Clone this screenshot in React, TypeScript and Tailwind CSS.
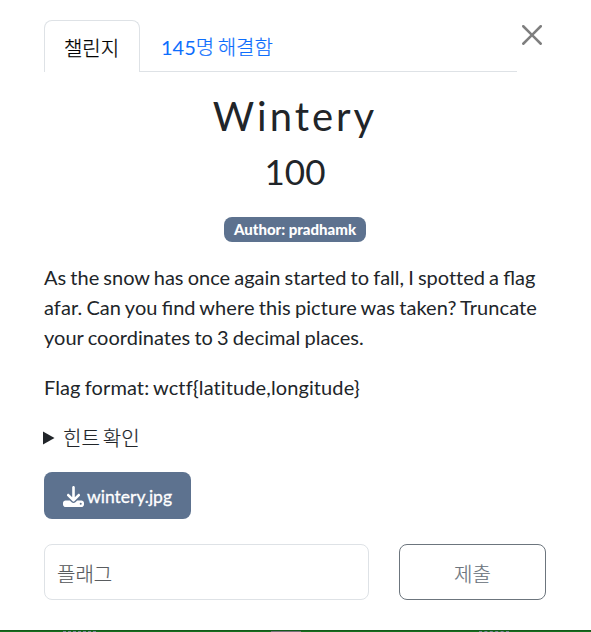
import React from "react";
import { FaDownload } from "react-icons/fa6";

function CloseIcon() {
  return (
    <svg viewBox="0 0 16 16" className="block size-5" fill="#000">
      <path d="M.293.293a1 1 0 0 1 1.414 0L8 6.586 14.293.293a1 1 0 1 1 1.414 1.414L9.414 8l6.293 6.293a1 1 0 0 1-1.414 1.414L8 9.414l-6.293 6.293a1 1 0 0 1-1.414-1.414L6.586 8 .293 1.707a1 1 0 0 1 0-1.414z" />
    </svg>
  );
}

function Ligature({ children }: { children: React.ReactNode }) {
  return <span className="tracking-normal [font-variant-ligatures:common-ligatures]">{children}</span>;
}

export default function App() {
  return (
    <div className="flex h-[632px] w-[591px] flex-col overflow-hidden bg-white font-['Lato','Noto_Sans_CJK_KR',sans-serif] text-[20px] leading-[30px] text-[#212529]">
      <main className="flex h-[630px] shrink-0 flex-col pl-11 pr-[45px] pt-5">
        <header className="flex h-[52px] items-start">
          <nav className="flex h-[52px] w-[473px]">
            <button className="h-[52px] w-24 rounded-t-lg border border-b-0 border-[#dee2e6] pr-px pt-[3px] font-['Noto_Sans_CJK_KR',sans-serif] font-light text-black [-webkit-text-stroke:0.25px]">챌린지</button>
            <button className="grow border-b border-[#dee2e6] pl-[21px] pt-0.5 text-left text-[#0d6efd] [word-spacing:-2px]">145<span className="font-light [-webkit-text-stroke:0.2px]">명 해결함</span></button>
          </nav>
          <button aria-label="Close" className="ml-[5px] mt-[5px] opacity-50">
            <CloseIcon />
          </button>
        </header>

        <h2 className="mt-5 text-center text-[40px] leading-[48px] tracking-[3px]">Wintery</h2>
        <h3 className="mt-[10px] text-center text-[35px] leading-[42px]">100</h3>
        <div className="mt-[25px] flex justify-center">
          <span className="flex h-[25px] w-[142px] items-center justify-center rounded-lg bg-[#5d728f] text-[15px] font-black leading-[15px] text-white">Author: pradhamk</span>
        </div>

        <p className="mt-5 whitespace-nowrap [font-variant-ligatures:none] [word-spacing:-1px]">
          As the snow has once again started to fall, I spotted a <Ligature>flag</Ligature><br />
          <span className="tracking-[0.07px]">afar. Can you <Ligature>find</Ligature> where this picture was taken? Truncate</span><br />
          <span className="tracking-[0.03px]">your coordinates to 3 decimal places.</span>
        </p>
        <p className="mt-5 tracking-[0.1px] [font-variant-ligatures:none] [word-spacing:-1px]">Flag format: wctf&#123;latitude,longitude&#125;</p>
        <div className="mt-[21px] flex h-[30px] items-center">
          <svg viewBox="0 0 12 14" className="-ml-px h-[14px] w-3" fill="#212529">
            <path d="M0 .5 11.5 7 0 13.5z" />
          </svg>
          <span className="ml-2 font-light [-webkit-text-stroke:0.2px] [word-spacing:-2.5px]">힌트 확인</span>
        </div>

        <a className="mt-[19px] flex h-[47px] w-[147px] items-center justify-center rounded-lg bg-[#5d728f] text-[17.5px] text-white">
          <FaDownload className="mr-[3px] mt-0.5 size-[21px]" />
          <span className="pt-[3px] [-webkit-text-stroke:0.3px_white]">wintery.jpg</span>
        </a>

        <form className="mt-[25px] flex h-14 justify-between">
          <div className="flex w-[325px] items-center rounded-lg border border-[#dee2e6] px-3 pt-[3px] font-light text-[#595c5f] [-webkit-text-stroke:0.2px]">플래그</div>
          <button type="button" className="w-[147px] rounded-lg border border-[#6c757d] pt-[3px] font-light text-[#6c757d] [-webkit-text-stroke:0.2px]">제출</button>
        </form>
      </main>
      <footer className="flex h-0.5 shrink-0 border-t border-[#14591b] bg-[#17701f]">
        <div className="ml-[63px] h-px w-[33px] border-t border-dashed border-[#77849a]" />
        <div className="ml-[175px] h-px w-[30px] bg-[#77707a]" />
        <div className="ml-[178px] h-px w-[30px] border-t border-dashed border-[#77849a]" />
      </footer>
    </div>
  );
}
